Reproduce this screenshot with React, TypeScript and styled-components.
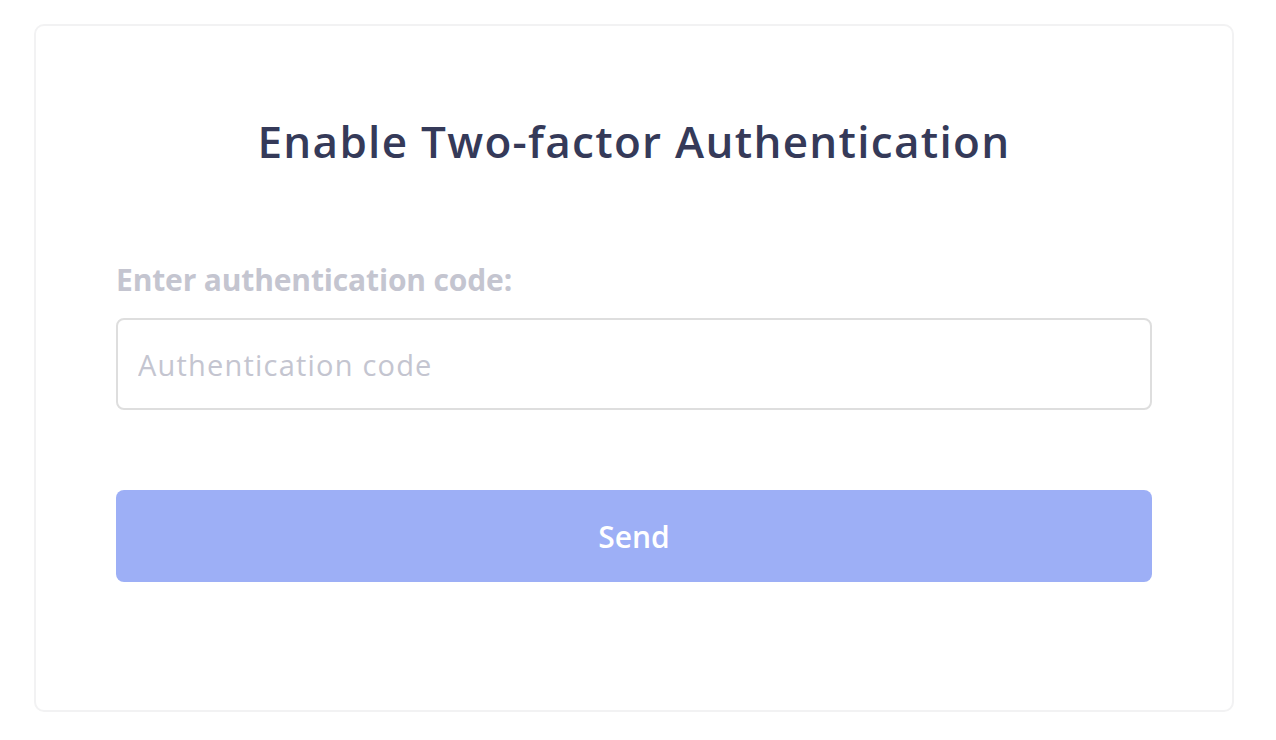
import { useState } from "react";
import styled, { createGlobalStyle } from "styled-components";

const GlobalStyle = createGlobalStyle`
  html, body {
    margin: 0;
    padding: 0;
    background: #ffffff;
  }
  body {
    font-family: "Open Sans", "Noto Sans", sans-serif;
  }
  * {
    box-sizing: border-box;
  }
`;

const Page = styled.div`
  padding: 24px 0 0 34px;
`;

const Card = styled.div`
  width: 1200px;
  height: 688px;
  border: 2px solid #f2f2f3;
  border-radius: 10px;
  background: #fff;
  padding: 89px 80px 0 80px;
  display: flex;
  flex-direction: column;
`;

const Title = styled.h1`
  margin: 0;
  text-align: center;
  font-size: 44px;
  line-height: 52px;
  font-weight: 600;
  color: #353a59;
  letter-spacing: 1.3px;
`;

const Form = styled.form`
  margin-top: 95px;
  display: flex;
  flex-direction: column;
`;

const Label = styled.label`
  font-size: 30px;
  line-height: 36px;
  font-weight: 700;
  letter-spacing: -0.15px;
  color: #c4c5d0;
  margin-bottom: 20px;
`;

const Input = styled.input`
  height: 92px;
  width: 100%;
  border: 2px solid #dedede;
  border-radius: 8px;
  padding: 0 20px;
  font-family: inherit;
  font-size: 29px;
  letter-spacing: 1.2px;
  color: #353a59;
  outline: none;
  &::placeholder {
    color: #c4c5d0;
  }
`;

const Button = styled.button<{ disabled?: boolean }>`
  margin-top: 80px;
  height: 92px;
  width: 100%;
  border: none;
  border-radius: 8px;
  background: ${({ disabled }) => (disabled ? "#9dafF6" : "#5b78f0")};
  color: #ffffff;
  font-family: inherit;
  font-size: 30px;
  font-weight: 600;
  cursor: pointer;
`;

export default function App() {
  const [code, setCode] = useState("");

  return (
    <>
      <GlobalStyle />
      <Page>
        <Card>
          <Title>Enable Two-factor Authentication</Title>
          <Form onSubmit={(e) => e.preventDefault()}>
            <Label htmlFor="code">Enter authentication code:</Label>
            <Input
              id="code"
              placeholder="Authentication code"
              value={code}
              onChange={(e) => setCode(e.target.value)}
            />
            <Button type="submit" disabled={code.length == 0}>
              Send
            </Button>
          </Form>
        </Card>
      </Page>
    </>
  );
}
